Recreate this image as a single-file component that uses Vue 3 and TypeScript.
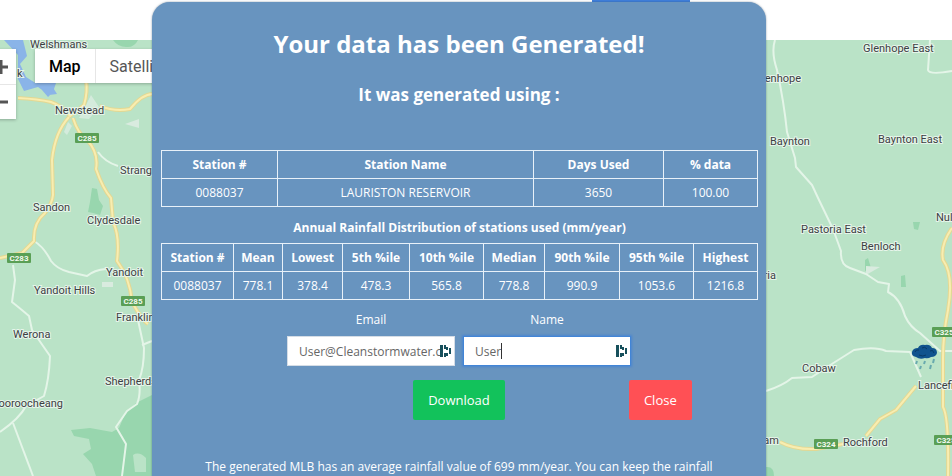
<script setup lang="ts">
import { ref } from 'vue'

interface Place {
  name: string
  x: number
  y: number
}

const email = ref('User@Cleanstormwater.com')
const userName = ref('User')

const stationHeads: string[] = ['Station #', 'Station Name', 'Days Used', '% data']
const stationRow: string[] = ['0088037', 'LAURISTON RESERVOIR', '3650', '100.00']

const rainHeads: string[] = [
  'Station #', 'Mean', 'Lowest', '5th %ile', '10th %ile', 'Median', '90th %ile', '95th %ile', 'Highest',
]
const rainRow: string[] = [
  '0088037', '778.1', '378.4', '478.3', '565.8', '778.8', '990.9', '1053.6', '1216.8',
]

const places: Place[] = [
  { name: 'Welshmans', x: 30, y: 8 },
  { name: 'k', x: 17, y: 37 },
  { name: 'Newstead', x: 55, y: 74 },
  { name: 'Strangways', x: 120, y: 134 },
  { name: 'Sandon', x: 33, y: 171 },
  { name: 'Clydesdale', x: 87, y: 184 },
  { name: 'Yandoit', x: 106, y: 236 },
  { name: 'Yandoit Hills', x: 34, y: 254 },
  { name: 'Franklinford', x: 116, y: 281 },
  { name: 'Werona', x: 13, y: 298 },
  { name: 'Shepherds Flat', x: 105, y: 345 },
  { name: 'Glenhope East', x: 863, y: 12 },
  { name: 'Baynton', x: 770, y: 105 },
  { name: 'Baynton East', x: 878, y: 103 },
  { name: 'Pastoria East', x: 801, y: 193 },
  { name: 'Benloch', x: 861, y: 210 },
  { name: 'Nulla Vale', x: 936, y: 181 },
  { name: 'Cobaw', x: 802, y: 332 },
  { name: 'Lancefield', x: 918, y: 349 },
  { name: 'Rochford', x: 843, y: 406 },
]

const cutPlaces: Place[] = [
  { name: 'Looroocheang', x: 63, y: 367 },
  { name: 'Glenhope', x: 801, y: 42 },
  { name: 'Pastoria', x: 776, y: 239 },
  { name: 'Newham', x: 779, y: 404 },
]

const shields: Place[] = [
  { name: 'C285', x: 75, y: 93 },
  { name: 'C283', x: 7, y: 213 },
  { name: 'C285', x: 121, y: 256 },
  { name: 'C325', x: 932, y: 287 },
  { name: 'C325', x: 934, y: 395 },
  { name: 'C324', x: 814, y: 399 },
]

const minorRoads: string[] = [
  'M98 112 Q105 122 118 126 M34 201 Q44 207 51 221 Q57 229 69 232 L87 236 Q94 230 106 229',
  'M13 225 L15 240 L12 262 Q22 270 29 276 L32 290 L50 316 Q49 340 44 356 L26 366 Q20 378 0 392',
  'M13 383 L33 436',
  'M138 280 L144 308 Q144 328 139 340 Q141 355 137 364 L127 371 L116 387 L126 404 L122 436',
  'M142 305 L152 301',
  'M775 0 Q771 12 777 30 Q784 62 787 92 L795 118 L796 127 L812 145 L819 160 L833 189 L841 211 Q840 225 850 228 L866 234 L878 242 L889 244 L888 252 Q900 258 905 276 Q910 287 920 293 L940 311 L952 311',
  'M930 0 L928 30 Q929 35 952 31',
  'M766 351 Q782 346 792 338 L812 337 Q833 323 854 310 Q875 306 886 311 L910 312 L921 337',
]

const mainRoads: string[] = [
  'M18 58 Q38 59 51 62 Q63 66 70 76 L84 65 Q88 52 86 40 M100 66 Q115 72 130 69 Q143 53 154 54',
  'M69 77 Q55 92 52 120 L53 155 Q52 164 45 173 Q33 183 34 201 L22 213 L0 218',
  'M73 78 Q78 94 87 100 Q99 113 96 129 Q103 149 111 158 L113 182 Q120 196 117 221 Q130 238 132 262 Q142 280 148 284',
  'M952 188 Q940 205 943 220 Q954 235 948 270 Q943 295 943 318 L943 367 Q949 377 948 436',
  'M916 346 L896 370 L880 379 L866 396',
  'M780 402 Q795 410 816 409 L843 404',
]
</script>

<template>
  <div class="page">
    <header class="topbar">
      <span class="tab-marker"></span>
    </header>

    <main class="map">
      <svg class="terrain" viewBox="0 0 952 436" preserveAspectRatio="xMidYMin slice" aria-label="Station map">
        <rect width="952" height="436" fill="#bae3c7" />
        <path d="M4 0 h19 l4 16 -7 8 6 13 22 14 4 -5 5 8 -8 1 -11 -8 -14 4 -6 -12 V15 Z M36 43 h20 l-3 9 -5 5 Z" fill="#8ab4e8" />
        <g fill="#98d6ae">
          <path d="M113 0 h25 q-4 8 -12 7 q-8 0 -13 -7 Z" />
          <path d="M92 148 l5 1 2 11 4 6 -3 9 -7 -2 -5 -1 2 -10 Z" />
          <path d="M152 355 l-16 8 -11 11 -6 14 -7 4 -22 -4 -19 2 3 6 15 3 2 10 -8 5 9 10 4 12 h57 Z" />
          <path d="M865 231 l6 -3 -3 -10 -3 2 Z M901 236 l4 -1 1 12 h-5 Z M913 182 h7 l-2 8 -4 -1 Z M766 427 q8 -1 8 9 h-8 Z" />
        </g>
        <path d="M133 415 q6 -4 13 3 v14 h-11 Z" fill="#bae3c7" />
        <path d="M86 65 l5 -10 8 12 -10 12 -10 -1 Z M68 82 l4 4 -5 9 -3 -3 Z" fill="#d4ebdc" />
        <path d="M125 84 l14 -5 v9 Z M866 226 l14 1 -14 8 Z M102 242 h11 v5 h-11 Z" fill="#d9ebdf" />
        <g class="minor">
          <path v-for="(d, i) in minorRoads" :key="i" :d="d" />
        </g>
        <g class="casing">
          <path v-for="(d, i) in mainRoads" :key="i" :d="d" />
        </g>
        <g class="major">
          <path v-for="(d, i) in mainRoads" :key="i" :d="d" />
        </g>
        <g v-for="(s, i) in shields" :key="'s' + i">
          <rect :x="s.x" :y="s.y" width="24" height="10" rx="1" fill="#5a9f55" />
          <text class="shield" :x="s.x + 12" :y="s.y + 8">{{ s.name }}</text>
        </g>
        <text v-for="p in places" :key="p.name" class="place" :x="p.x" :y="p.y">{{ p.name }}</text>
        <text v-for="p in cutPlaces" :key="p.name" class="place end" :x="p.x" :y="p.y">{{ p.name }}</text>
        <g>
          <path d="M916 317 q-5 -1 -4 -5 q1 -4 6 -4 q2 -4 7 -3 q5 -1 7 3 q5 0 5 5 q-1 4 -6 4 q-3 2 -6 1 q-5 2 -9 -1 Z" fill="#10538e" />
          <path d="M915 312 q1 -3 4 -2 M922 308 q3 -2 5 1 M930 311 q3 -2 4 2 M919 315 q4 2 7 0" fill="none" stroke="#083a68" stroke-width="1" />
          <path d="M917 321 l-1 3 M925 321 l-1 3 M934 319 l-1 4 M921 326 l-1 3 M931 325 l-1 4" stroke="#68a9ae" stroke-width="2" />
        </g>
      </svg>

      <div class="zoom-control">
        <button type="button" aria-label="Zoom in">
          <svg viewBox="0 0 18 18"><path d="M9 2 V16 M2 9 H16" /></svg>
        </button>
        <button type="button" aria-label="Zoom out">
          <svg viewBox="0 0 18 18"><path d="M2 9 H16" /></svg>
        </button>
      </div>
      <div class="type-control">
        <button type="button" class="active">Map</button>
        <button type="button">Satellite</button>
      </div>
    </main>

    <div class="overlay">
      <section class="modal" role="dialog" aria-labelledby="modal-title">
        <h1 id="modal-title">Your data has been Generated!</h1>
        <h2>It was generated using :</h2>

        <table class="stations">
          <colgroup><col v-for="h in stationHeads" :key="h" /></colgroup>
          <thead>
            <tr><th v-for="h in stationHeads" :key="h" scope="col">{{ h }}</th></tr>
          </thead>
          <tbody>
            <tr><td v-for="c in stationRow" :key="c">{{ c }}</td></tr>
          </tbody>
        </table>

        <table class="rainfall">
          <caption>Annual Rainfall Distribution of stations used (mm/year)</caption>
          <colgroup><col v-for="h in rainHeads" :key="h" /></colgroup>
          <thead>
            <tr><th v-for="h in rainHeads" :key="h" scope="col">{{ h }}</th></tr>
          </thead>
          <tbody>
            <tr><td v-for="c in rainRow" :key="c">{{ c }}</td></tr>
          </tbody>
        </table>

        <form @submit.prevent>
          <div class="fields">
            <div class="field">
              <label for="email">Email</label>
              <div class="box">
                <input id="email" v-model="email" type="text" />
                <svg class="vault" viewBox="0 0 12 12"><path d="M1 0h3v12H1z M5 0h2v4H5z M5 8h2v4H5z M7 2h2v3H7z M7 8h2v3H7z M10 3h2v6h-2z" /></svg>
              </div>
            </div>
            <div class="field">
              <label for="name">Name</label>
              <div class="box focused">
                <input id="name" v-model="userName" type="text" />
                <span class="caret"></span>
                <svg class="vault" viewBox="0 0 12 12"><path d="M1 0h3v12H1z M5 0h2v4H5z M5 8h2v4H5z M7 2h2v3H7z M7 8h2v3H7z M10 3h2v6h-2z" /></svg>
              </div>
            </div>
          </div>
          <div class="actions">
            <button type="submit" class="download">Download</button>
            <button type="button" class="close">Close</button>
          </div>
        </form>

        <p>The generated MLB has an average rainfall value of 699 mm/year. You can keep the rainfall</p>
      </section>
    </div>
  </div>
</template>

<style>
body {
  margin: 0;
  overflow: hidden;
}
</style>

<style scoped>
.page {
  position: relative;
  display: flex;
  flex-direction: column;
  height: 100vh;
  overflow: hidden;
  background: #fff;
  font-family: "Open Sans", "Noto Sans", sans-serif;
}
.topbar {
  display: flex;
  flex: 0 0 40px;
  justify-content: flex-end;
  padding-right: 262px;
}
.tab-marker {
  width: 98px;
  height: 2px;
  background: #3f7fdc;
}
.map {
  position: relative;
  flex: 1;
  overflow: hidden;
  background: #bae3c7;
}
.terrain {
  display: block;
  width: 100%;
  height: 100%;
}
.minor path {
  fill: none;
  stroke: #e4f5e8;
  stroke-width: 2;
  stroke-linejoin: round;
}
.casing path {
  fill: none;
  stroke: #e3d893;
  stroke-width: 4;
  stroke-linejoin: round;
}
.major path {
  fill: none;
  stroke: #f8edb0;
  stroke-width: 2;
  stroke-linejoin: round;
}
.place {
  font: 11px Roboto, sans-serif;
  fill: #3c4043;
  stroke: #e6f5ea;
  stroke-width: 2px;
  paint-order: stroke;
}
.place.end {
  text-anchor: end;
}
.shield {
  font: bold 8px Roboto, sans-serif;
  fill: #f2faef;
  text-anchor: middle;
}
.zoom-control,
.type-control {
  position: absolute;
  display: flex;
  background: #fff;
  box-shadow: 0 1px 3px rgba(0, 0, 0, 0.25);
}
.zoom-control {
  top: 9px;
  left: -18px;
  flex-direction: column;
  width: 34px;
}
.zoom-control button {
  height: 35px;
  padding: 8px;
  border: 0;
  background: none;
}
.zoom-control button + button {
  border-top: 1px solid #e6e6e6;
}
.zoom-control svg {
  display: block;
  width: 18px;
  height: 18px;
  fill: none;
  stroke: #555;
  stroke-width: 3;
  margin-left: 2px;
}
.type-control {
  top: 9px;
  left: 35px;
  height: 34px;
}
.type-control button {
  padding: 0 14px;
  border: 0;
  background: none;
  color: #565656;
  font: 16px Roboto, sans-serif;
}
.type-control button + button {
  border-left: 1px solid #e6e6e6;
}
.type-control .active {
  color: #000;
  font-weight: 500;
}
.overlay {
  position: absolute;
  inset: 0 34px 0 0;
  display: flex;
  align-items: flex-start;
  justify-content: center;
  padding-top: 2px;
  overflow: hidden;
}
.modal {
  box-sizing: border-box;
  width: calc(100% - 304px);
  min-height: 100vh;
  padding: 22px 9px;
  border-radius: 18px;
  background: #6894bf;
  box-shadow: 0 0 2px rgba(40, 70, 100, 0.6);
  color: #fff;
  font-size: 12px;
  text-align: center;
}
h1 {
  margin: 0;
  font-size: 24px;
  font-weight: 700;
  line-height: 40px;
}
h2 {
  margin: 18px 0 42px;
  font-size: 17px;
  font-weight: 700;
  line-height: 26px;
}
table {
  width: 100%;
  border-collapse: collapse;
  table-layout: fixed;
}
th,
td {
  box-sizing: border-box;
  height: 28px;
  padding: 0;
  border: 1px solid #e8f1f9;
  line-height: 18px;
}
th {
  font-weight: 700;
}
.stations col:nth-child(1) { width: 116px; }
.stations col:nth-child(2) { width: 256px; }
.stations col:nth-child(3) { width: 130px; }
.stations col:nth-child(4) { width: 94px; }
.rainfall col:nth-child(1) { width: 72px; }
.rainfall col:nth-child(2) { width: 49px; }
.rainfall col:nth-child(3) { width: 60px; }
.rainfall col:nth-child(4) { width: 67px; }
.rainfall col:nth-child(5) { width: 74px; }
.rainfall col:nth-child(6) { width: 61px; }
.rainfall col:nth-child(7) { width: 75px; }
.rainfall col:nth-child(8) { width: 74px; }
.rainfall col:nth-child(9) { width: 64px; }
caption {
  padding: 12px 0 6px;
  font-weight: 700;
  line-height: 18px;
}
.fields {
  display: flex;
  justify-content: center;
  gap: 8px;
  margin-top: 11px;
}
.field label {
  display: block;
  line-height: 18px;
}
.box {
  position: relative;
  width: 168px;
  margin-top: 7px;
}
input {
  box-sizing: border-box;
  display: block;
  width: 100%;
  height: 30px;
  padding: 0 11px;
  border: 1px solid #d5dde6;
  border-radius: 0;
  outline: 0;
  background: #fff;
  color: #666;
  font: inherit;
}
.focused input {
  border-color: #4285d6;
  box-shadow: 0 0 2px 1px #4a86d0;
}
.vault {
  position: absolute;
  top: 9px;
  right: 4px;
  width: 12px;
  height: 12px;
  fill: #17505c;
}
.caret {
  position: absolute;
  top: 7px;
  left: 38px;
  width: 1px;
  height: 16px;
  background: #333;
}
.actions {
  display: grid;
  grid-template-columns: repeat(3, 1fr);
  gap: 8px;
  justify-items: center;
  margin-top: 14px;
}
.actions button {
  height: 40px;
  padding: 0 15px;
  border: 0;
  border-radius: 2px;
  color: #fff;
  font: 13px "Open Sans", "Noto Sans", sans-serif;
}
.download {
  grid-column: 2;
  background: #12c25b;
}
.close {
  grid-column: 3;
  background: #ff5055;
}
p {
  margin: 38px 0 0;
  line-height: 18px;
}
</style>
